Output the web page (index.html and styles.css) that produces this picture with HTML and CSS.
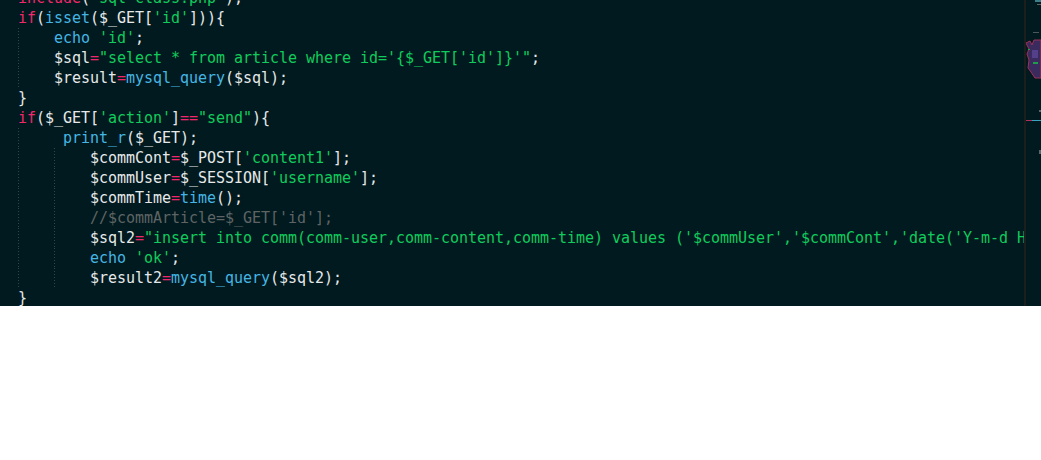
FILE: index.html
```html
<!DOCTYPE html>
<html>
<head>
<meta charset="utf-8">
<link rel="stylesheet" href="styles.css">
</head>
<body>
<div class="editor">
  <div class="code">
    <div class="lines">
<div class="ln"><span class="kw">include</span>(<span class="str">'sql-class.php'</span>);</div>
<div class="ln"><span class="kw">if</span>(<span class="fn">isset</span>($_GET[<span class="str">'id'</span>])){</div>
<div class="ln"><span class="ind g"></span><span class="fn">echo</span> <span class="str">'id'</span>;</div>
<div class="ln"><span class="ind g"></span>$sql<span class="op">=</span><span class="str">"select * from article where id='{$_GET['id']}'"</span>;</div>
<div class="ln"><span class="ind g"></span>$result<span class="op">=</span><span class="fn">mysql_query</span>($sql);</div>
<div class="ln">}</div>
<div class="ln"><span class="kw">if</span>($_GET[<span class="str">'action'</span>]<span class="op">==</span><span class="str">"send"</span>){</div>
<div class="ln"><span class="ind g"></span><span class="ind1"></span><span class="fn">print_r</span>($_GET);</div>
<div class="ln"><span class="ind g"></span><span class="ind g"></span>$commCont<span class="op">=</span>$_POST[<span class="str">'content1'</span>];</div>
<div class="ln"><span class="ind g"></span><span class="ind g"></span>$commUser<span class="op">=</span>$_SESSION[<span class="str">'username'</span>];</div>
<div class="ln"><span class="ind g"></span><span class="ind g"></span>$commTime<span class="op">=</span><span class="fn">time</span>();</div>
<div class="ln"><span class="ind g"></span><span class="ind g"></span><span class="cm">//$commArticle=$_GET['id'];</span></div>
<div class="ln"><span class="ind g"></span><span class="ind g"></span>$sql2<span class="op">=</span><span class="str">"insert into comm(comm-user,comm-content,comm-time) values ('$commUser','$commCont','date('Y-m-d H:i:s',$commTime)')"</span>;</div>
<div class="ln"><span class="ind g"></span><span class="ind g"></span><span class="fn">echo</span> <span class="str">'ok'</span>;</div>
<div class="ln"><span class="ind g"></span><span class="ind g"></span>$result2<span class="op">=</span><span class="fn">mysql_query</span>($sql2);</div>
<div class="ln">}</div>
    </div>
  </div>
  <div class="divider"></div>
  <div class="minimap">
    <svg width="15" height="306" viewBox="0 0 15 306">
      <rect x="9" y="0" width="6" height="2" fill="#3a7f8a"/>
      <rect x="11" y="4" width="4" height="1" fill="#5a6a6c"/>
      <rect x="7" y="32" width="6" height="1" fill="#4a5a5c"/>
      <path d="M0 43 L4 41 L6 45 L8 40 L15 40 L15 78 L9 78 L5 72 L2 68 L3 60 L1 54 L3 49 Z" fill="#3b2a5e" stroke="#a0305a" stroke-width="1"/>
      <rect x="6" y="50" width="6" height="8" fill="#54408a"/>
      <rect x="7" y="62" width="5" height="2" fill="#1e9c4e"/>
      <rect x="2" y="49" width="2" height="1" fill="#1e9c4e"/>
      <rect x="13" y="110" width="2" height="2" fill="#5a6a6c"/>
      <rect x="0" y="120" width="6" height="1" fill="#b0305e"/>
      <rect x="6" y="120" width="9" height="1" fill="#3aa5c0"/>
      <rect x="13" y="150" width="2" height="4" fill="#5a6a6c"/>
    </svg>
  </div>
</div>
</body>
</html>
```

FILE: styles.css
```css
html, body {
  margin: 0;
  padding: 0;
  background: #ffffff;
}

.editor {
  display: flex;
  width: 100%;
  height: 306px;
  background: #011a1f;
  overflow: hidden;
}

.code {
  flex: 1;
  min-width: 0;
  overflow: hidden;
  padding-left: 18px;
}

.lines {
  margin-top: -12px;
  font-family: "DejaVu Sans Mono", "Liberation Mono", monospace;
  font-size: 15px;
  letter-spacing: -0.03px;
  line-height: 20px;
  color: #e6e9e9;
}

.ln {
  height: 20px;
  white-space: pre;
}

.ind {
  display: inline-block;
  width: 36px;
  height: 20px;
  vertical-align: top;
}

.ind1 {
  display: inline-block;
  width: 9px;
  height: 20px;
  vertical-align: top;
}

.g {
  background-image: repeating-linear-gradient(to bottom, #33454a 0 1px, transparent 1px 3px);
  background-size: 1px 100%;
  background-repeat: no-repeat;
  background-position: 0 0;
}

.kw { color: #f0276a; }
.op { color: #f0276a; }
.str { color: #10cc5c; }
.fn { color: #45b6e4; }
.cm { color: #5e6464; }

.divider {
  width: 2px;
  background: #1c1e1c;
}

.minimap {
  width: 15px;
}

.minimap svg {
  display: block;
}
```
